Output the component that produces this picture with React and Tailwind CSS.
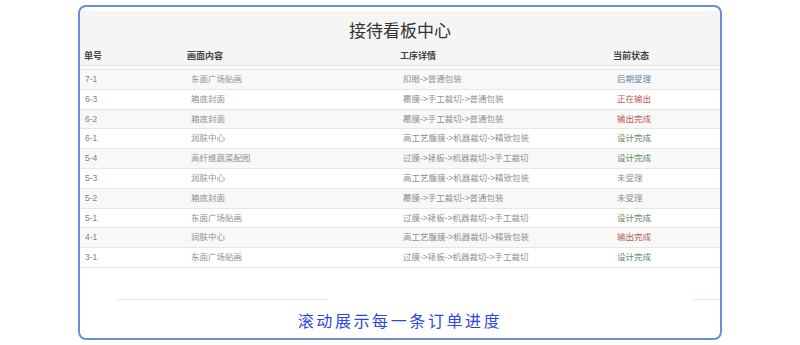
import React from "react";

const rows = [
  { no: "7-1", pic: "东面广场贴画", step: "扣眼->普通包装", status: "后期受理" },
  { no: "6-3", pic: "箱底封面", step: "覆膜->手工裁切->普通包装", status: "正在输出" },
  { no: "6-2", pic: "箱底封面", step: "覆膜->手工裁切->普通包装", status: "输出完成" },
  { no: "6-1", pic: "润肤中心", step: "高工艺腹膜->机器裁切->精致包装", status: "设计完成" },
  { no: "5-4", pic: "高纤维蔬菜配图", step: "过膜->裱板->机器裁切->手工裁切", status: "设计完成" },
  { no: "5-3", pic: "润肤中心", step: "高工艺腹膜->机器裁切->精致包装", status: "未受理" },
  { no: "5-2", pic: "箱底封面", step: "覆膜->手工裁切->普通包装", status: "未受理" },
  { no: "5-1", pic: "东面广场贴画", step: "过膜->裱板->机器裁切->手工裁切", status: "设计完成" },
  { no: "4-1", pic: "润肤中心", step: "高工艺腹膜->机器裁切->精致包装", status: "输出完成" },
  { no: "3-1", pic: "东面广场贴画", step: "过膜->裱板->机器裁切->手工裁切", status: "设计完成" },
];

const statusColor = {
  后期受理: "text-[#5a86a3]",
  正在输出: "text-[#b85a58]",
  输出完成: "text-[#b85a58]",
  设计完成: "text-[#5d8a5d]",
  未受理: "text-[#8f8f8f]",
};

const App = () => {
  return (
    <div className="w-[800px] h-[345px] bg-white pt-[5px] font-['Liberation_Sans','Noto_Sans_CJK_SC',sans-serif]">
      <div className="ml-[78px] w-[644px] h-[335px] border-2 border-[#6b8dd6] rounded-[8px] pt-[4px] overflow-hidden">
        {/* Title and column header */}
        <div className="bg-[#f5f5f5] pt-[9px] pb-[3px] border-b border-[#e2e2e2]">
          <h1 className="text-center text-[17px] leading-[20px] text-[#333] font-['Noto_Sans_CJK_SC',serif]">
            接待看板中心
          </h1>
          <div className="mt-[10px] pl-[4px] grid grid-cols-[103px_213px_213px_1fr] text-[9px] leading-[12px] font-bold text-[#444]">
            <span>单号</span>
            <span>画面内容</span>
            <span>工序详情</span>
            <span>当前状态</span>
          </div>
        </div>

        {/* Order rows */}
        <div className="mt-[3px] border-b border-[#e6e6e6]">
          {rows.map((r, i) => (
            <div
              key={r.no}
              className={`h-[19.8px] border-t border-[#e6e6e6] pl-[5px] grid grid-cols-[106px_212px_214px_1fr] items-center text-[8.5px] text-[#909090] ${
                i % 2 === 0 ? "bg-[#f8f8f8]" : "bg-white"
              }`}
            >
              <span className="text-[#808080]">{r.no}</span>
              <span>{r.pic}</span>
              <span>{r.step}</span>
              <span className={statusColor[r.status]}>{r.status}</span>
            </div>
          ))}
        </div>

        {/* Decorative lines */}
        <div className="mt-[31px] flex">
          <div className="ml-[36px] w-[212px] h-px bg-[#dcf0f4]" />
          <div className="ml-auto w-[27px] h-px bg-[#cdeef2]" />
        </div>

        {/* Footer caption */}
        <p className="mt-[10px] text-center text-[16px] leading-[20px] tracking-[2.6px] text-[#2a46e4] font-['Noto_Sans_CJK_SC',sans-serif]">
          滚动展示每一条订单进度
        </p>
      </div>
    </div>
  );
};

export default App;
